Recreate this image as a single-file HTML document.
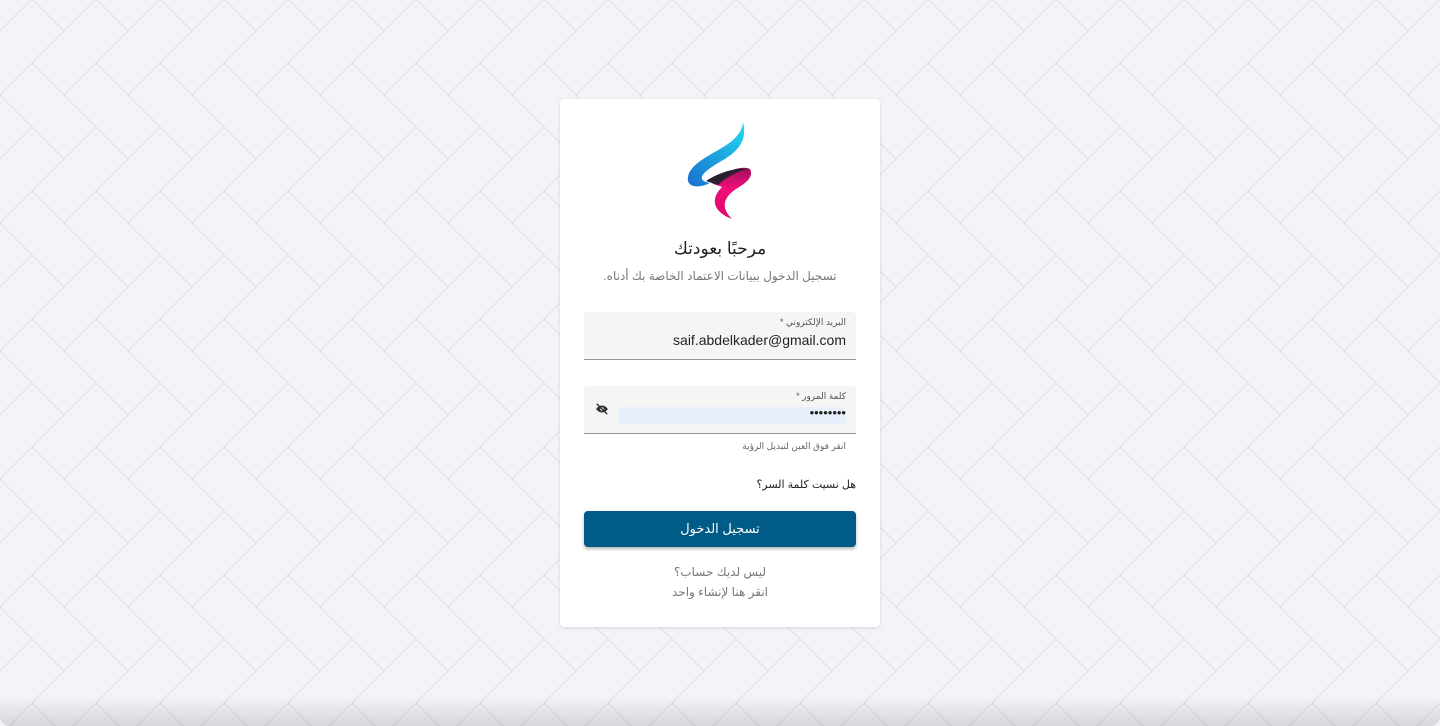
<!DOCTYPE html>
<html><head><meta charset="utf-8"><style>
html,body{margin:0;padding:0;width:1440px;height:726px;overflow:hidden;}
body{background:#f4f4f8;position:relative;font-family:"Liberation Sans","DejaVu Sans",sans-serif;}
#bg{position:absolute;left:0;top:0;}
.shade{position:absolute;left:0;right:0;bottom:0;height:30px;background:linear-gradient(to bottom,rgba(0,0,0,0),rgba(0,0,0,0.12));border-radius:0 0 10px 10px;}
.card{position:absolute;left:560px;top:99px;width:320px;height:528px;background:#fff;border-radius:4px;box-shadow:0 1px 3px rgba(0,0,0,0.12);}
.t{position:absolute;direction:rtl;white-space:nowrap;}
.field{position:absolute;left:24px;width:272px;height:47px;background:#f5f5f5;border-bottom:1px solid #9a97a5;border-radius:4px 4px 0 0;}
.lbl{position:absolute;right:10px;top:5px;font-size:9px;color:#555;direction:rtl;}
.btn{position:absolute;left:24px;top:412px;width:272px;height:36px;background:#005b87;border-radius:4px;box-shadow:0 2px 3px rgba(0,0,0,0.3);color:#fff;font-size:13px;text-align:center;line-height:36px;}
</style></head><body>
<svg id="bg" width="1440" height="726">
<defs><pattern id="p" width="64" height="128" patternUnits="userSpaceOnUse">
<path d="M32 63L127 158M-32 63L63 158M32 -65L127 30M-32 -65L63 30M0 95L95 0M-64 95L31 0M0 223L95 128M-64 223L31 128M64 95L159 0" stroke="#e2e2e7" stroke-width="1.3" fill="none"/>
</pattern></defs>
<rect width="1440" height="726" fill="url(#p)"/>
</svg>
<div class="shade"></div>
<div class="card">
<svg style="position:absolute;left:124px;top:22px" width="70" height="104" viewBox="0 0 70 104">
<defs>
<linearGradient id="b" x1="0" y1="1" x2="1" y2="0"><stop offset="0" stop-color="#1a6fd0"/><stop offset="1" stop-color="#22d8ec"/></linearGradient>
<linearGradient id="k" x1="0" y1="0" x2="0" y2="1"><stop offset="0" stop-color="#a0105a"/><stop offset="0.4" stop-color="#f0107a"/><stop offset="1" stop-color="#e0086a"/></linearGradient>
</defs>
<path d="M59 1C64 22 52 32 34 42C14 54 14 60 26 62C14 68 2 66 4 56C6 44 22 36 36 28C50 20 58 12 59 1Z" fill="url(#b)"/>
<path d="M28 62C40 50 58 44 66 48C70 56 62 62 52 68C40 76 36 86 48 98C32 92 24 80 38 66C34 64 30 64 28 62Z" fill="url(#k)"/>
<path d="M22 60C34 52 52 46 64 48C54 50 42 56 34 64Z" fill="#2a2030"/>
</svg>
<div class="t" style="left:0;width:320px;text-align:center;top:140px;font-size:17px;color:#222;direction:rtl">مرحبًا بعودتك</div>
<div class="t" style="left:0;width:320px;text-align:center;top:170px;font-size:12px;color:#777">تسجيل الدخول ببيانات الاعتماد الخاصة بك أدناه.</div>
<div class="field" style="top:213px">
<div class="lbl">البريد الإلكتروني *</div>
<div style="position:absolute;right:10px;top:20px;font-size:14px;color:#222">saif.abdelkader@gmail.com</div>
</div>
<div class="field" style="top:287px">
<div class="lbl">كلمة المرور *</div>
<div style="position:absolute;left:35px;top:21px;width:227px;height:17px;background:#e8f0fe;"></div>
<div style="position:absolute;right:10px;top:19px;font-size:13px;color:#222">••••••••</div>
<svg style="position:absolute;left:11px;top:16px" width="14" height="14" viewBox="0 0 24 24"><path d="M12 6c-5 0-9 4-10 6 1 2 5 6 10 6s9-4 10-6c-1-2-5-6-10-6zm0 9a3 3 0 110-6 3 3 0 010 6z" fill="#333"/><path d="M3 3L21 21" stroke="#333" stroke-width="2.5"/></svg>
</div>
<div class="t" style="right:34px;top:342px;font-size:9px;color:#666">انقر فوق العين لتبديل الرؤية</div>
<div class="t" style="right:24px;top:379px;font-size:11px;color:#222">هل نسيت كلمة السر؟</div>
<div class="btn">تسجيل الدخول</div>
<div class="t" style="left:0;width:320px;text-align:center;top:466px;font-size:12px;color:#777">ليس لديك حساب؟</div>
<div class="t" style="left:0;width:320px;text-align:center;top:486px;font-size:12px;color:#777">انقر هنا لإنشاء واحد</div>
</div>
</body></html>
